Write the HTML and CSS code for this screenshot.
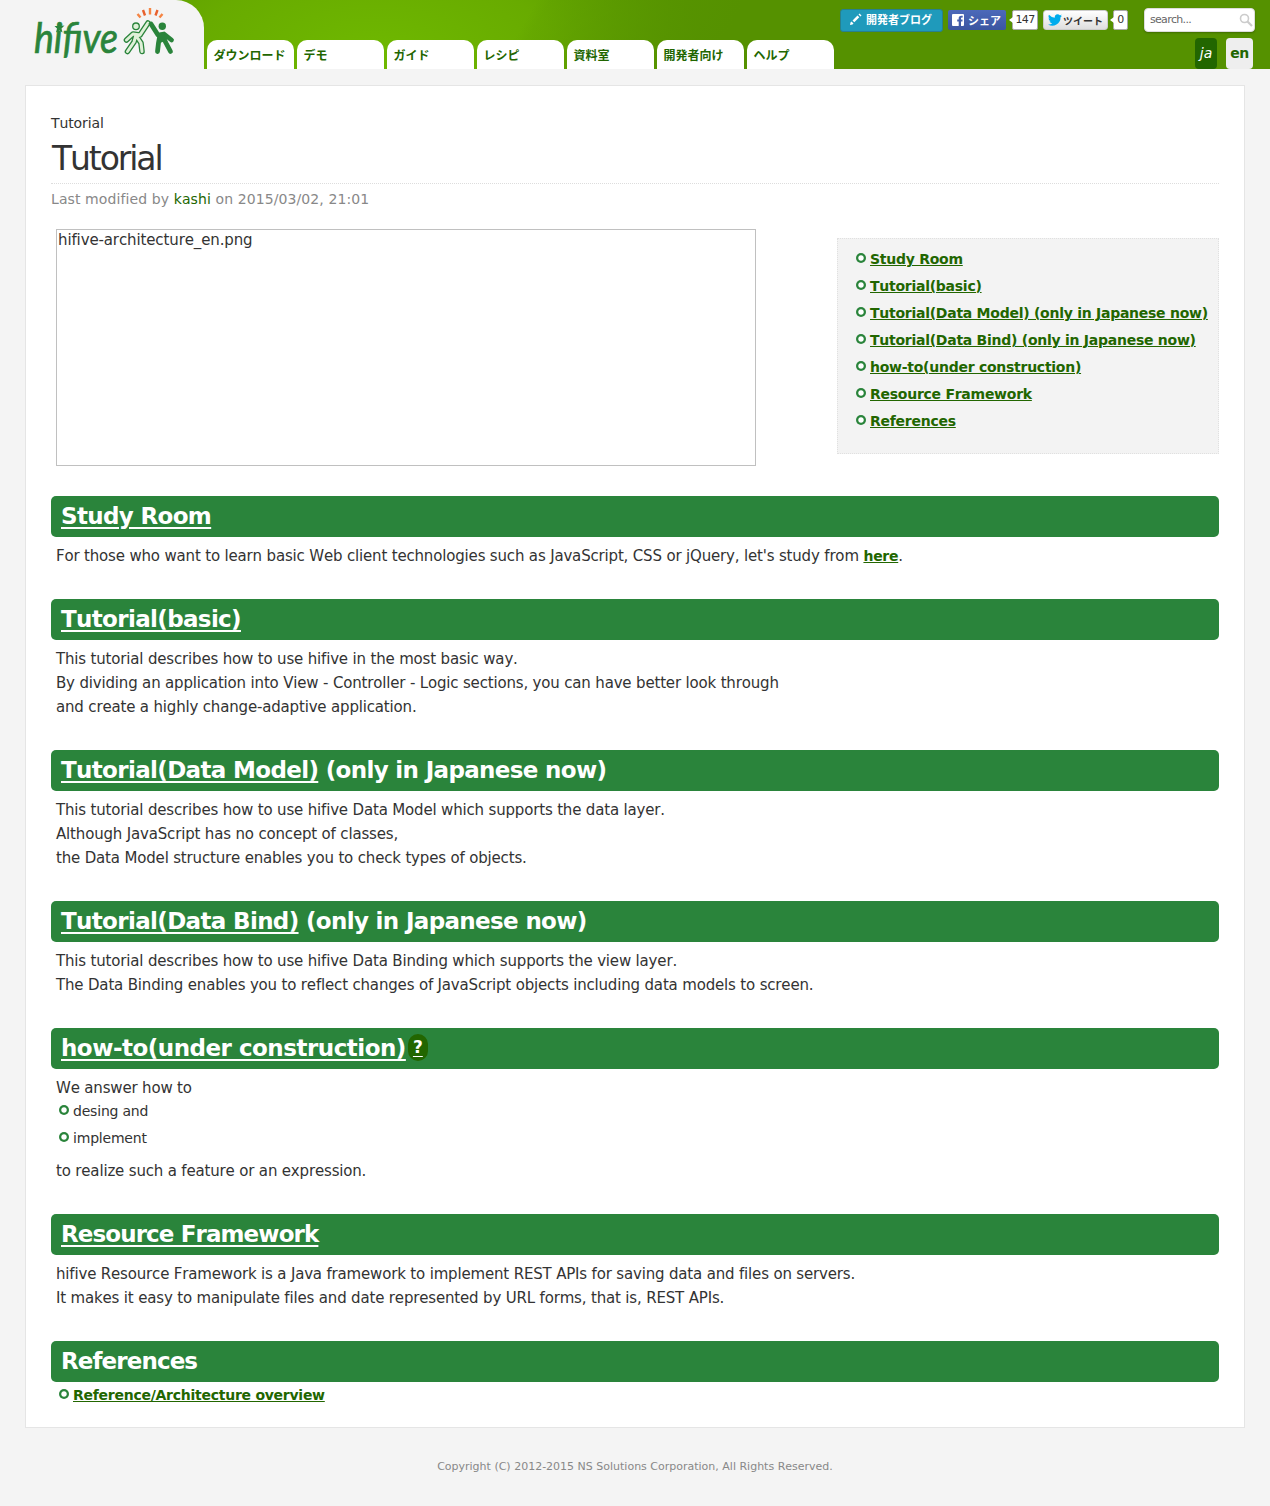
FILE: index.html
```html
<!DOCTYPE html>
<html lang="en">
<head>
<meta charset="utf-8">
<title>Tutorial - hifive</title>
<link rel="stylesheet" href="styles.css">
</head>
<body>
<header class="site-header">
  <a class="logo" aria-label="hifive">
    <svg width="150" height="62" viewBox="30 6 150 62">
      <text x="34" y="53" textLength="84" lengthAdjust="spacingAndGlyphs" class="logo-word">hifive</text>
      <path d="M58 23.500l2.500 2.500 4-.5-3 3 1 4-3-2-3.500 2 1-4-2.500-2.500h3z" fill="#2a843b"/>
      <g stroke-width="2.400">
        <path d="M140.500 17.500l-3-3.500M159.500 17.500l3-3.500" stroke="#f58544"/>
        <path d="M145 15.500l-2-5.500M155.500 15.500l2-5.500" stroke="#e8612d"/>
        <path d="M150 14.500V8" stroke="#f58544"/>
      </g>
      <g fill="none" stroke-linecap="round" stroke-linejoin="round">
        <g stroke="#2a843b" stroke-width="5.600">
          <path d="M148 23l-8 12-7-1-6.500 6M136 35l-2 7-6.500 9.500M137 37l4 6 1 8.500M137 36l3-1"/>
        </g>
        <g stroke="#dff0d8" stroke-width="3">
          <path d="M148 23l-8 12-7-1-6.500 6M136 35l-2 7-6.500 9.500M137 37l4 6 1 8.500M137 36l3-1"/>
        </g>
        <circle cx="136" cy="26.300" r="3.300" fill="#dff0d8" stroke="#2a843b" stroke-width="1.300"/>
        <path d="M151 24l7 11 6-1 7.500 6M160 35l-1.500 8-1 8.500M162 35l4 8 4.500 8.500" stroke="#2a843b" stroke-width="4.800"/>
        <path d="M158 34h6l1 7-5 2z" fill="#2a843b"/>
        <circle cx="162.300" cy="26.300" r="3.700" fill="#2a843b"/>
      </g>
    </svg>
  </a>
  <nav class="tabs">
    <a>ダウンロード</a><a>デモ</a><a>ガイド</a><a>レシピ</a><a>資料室</a><a>開発者向け</a><a>ヘルプ</a>
  </nav>
  <div class="tools">
    <div class="tool-row">
      <a class="blog"><svg width="12" height="12" viewBox="0 0 12 12"><path d="M0 12l.5-2.500 1-1 2 2-1 1zM2.500 7.500l5-5 1.800 1.800-5 5zM8.500 1.500l1-1 2 2-1 1z" fill="#fff"/></svg>開発者ブログ</a>
      <a class="share"><svg width="12" height="12" viewBox="0 0 12 12"><path d="M1 0h10a1 1 0 0 1 1 1v10a1 1 0 0 1-1 1H9V7.500h1.500v-2H9V4.300c0-.6.300-.8.900-.8h.8V1.700H9.300C7.500 1.700 6.700 2.700 6.700 4v1.500H5.200v2h1.500V12H1a1 1 0 0 1-1-1V1a1 1 0 0 1 1-1z" fill="#fff"/></svg>シェア</a>
      <span class="count count-share">147</span>
      <a class="tweet"><svg width="14" height="12" viewBox="0 0 24 20"><path d="M24 2.500a10 10 0 0 1-2.800.8A5 5 0 0 0 23.300.6a10 10 0 0 1-3.100 1.200 4.900 4.900 0 0 0-8.400 4.500A14 14 0 0 1 1.700 1.200a4.900 4.900 0 0 0 1.500 6.500 5 5 0 0 1-2.200-.6 4.900 4.900 0 0 0 3.900 4.900 5 5 0 0 1-2.200.1 4.900 4.900 0 0 0 4.600 3.400A9.900 9.900 0 0 1 0 17.500a14 14 0 0 0 21.500-12.400A10 10 0 0 0 24 2.500z" fill="#00aced"/></svg>ツイート</a>
      <span class="count count-tweet">0</span>
      <div class="search"><span>search...</span><svg width="14" height="14" viewBox="0 0 14 14"><circle cx="5.500" cy="5.500" r="4" fill="none" stroke="#ccc" stroke-width="1.600"/><path d="M8.500 8.500l4.500 4.500" stroke="#ccc" stroke-width="2.200"/></svg></div>
    </div>
    <div class="langs"><a class="lang-ja">ja</a><a class="lang-en">en</a></div>
  </div>
</header>
<main class="content">
  <div class="crumb">Tutorial</div>
  <h1>Tutorial</h1>
  <p class="modified">Last modified by <a>kashi</a> on 2015/03/02, 21:01</p>
  <div class="intro">
    <div class="figure">hifive-architecture_en.png</div>
    <ul class="toc">
      <li><a>Study Room</a></li>
      <li><a>Tutorial(basic)</a></li>
      <li><a>Tutorial(Data Model) (only in Japanese now)</a></li>
      <li><a>Tutorial(Data Bind) (only in Japanese now)</a></li>
      <li><a>how-to(under construction)</a></li>
      <li><a>Resource Framework</a></li>
      <li><a>References</a></li>
    </ul>
  </div>
  <section>
    <h2><a>Study Room</a></h2>
    <p>For those who want to learn basic Web client technologies such as JavaScript, CSS or jQuery, let's study from <a>here</a>.</p>
  </section>
  <section>
    <h2><a>Tutorial(basic)</a></h2>
    <p>This tutorial describes how to use hifive in the most basic way.<br>By dividing an application into View - Controller - Logic sections, you can have better look through<br>and create a highly change-adaptive application.</p>
  </section>
  <section>
    <h2><a>Tutorial(Data Model)</a> (only in Japanese now)</h2>
    <p>This tutorial describes how to use hifive Data Model which supports the data layer.<br>Although JavaScript has no concept of classes,<br>the Data Model structure enables you to check types of objects.</p>
  </section>
  <section>
    <h2><a>Tutorial(Data Bind)</a> (only in Japanese now)</h2>
    <p>This tutorial describes how to use hifive Data Binding which supports the view layer.<br>The Data Binding enables you to reflect changes of JavaScript objects including data models to screen.</p>
  </section>
  <section>
    <h2 class="loose"><a>how-to(under construction)</a><a class="hint">?</a></h2>
    <p>We answer how to</p>
    <ul class="steps">
      <li>desing and</li>
      <li>implement</li>
    </ul>
    <p class="tail">to realize such a feature or an expression.</p>
  </section>
  <section>
    <h2 class="tight"><a>Resource Framework</a></h2>
    <p>hifive Resource Framework is a Java framework to implement REST APIs for saving data and files on servers.<br>It makes it easy to manipulate files and date represented by URL forms, that is, REST APIs.</p>
  </section>
  <section>
    <h2 class="tight">References</h2>
    <ul class="steps refs">
      <li><a>Reference/Architecture overview</a></li>
    </ul>
  </section>
</main>
<footer class="footer">Copyright (C) 2012-2015 NS Solutions Corporation, All Rights Reserved.</footer>
</body>
</html>
```
FILE: styles.css
```css
*, *::before { box-sizing: border-box; }
body {
  margin: 0;
  height: 1506px;
  background: #f4f4f4;
  color: #333;
  font-family: "DejaVu Sans", "Noto Sans CJK JP", sans-serif;
  font-size: 14px;
  font-kerning: none;
  font-variant-ligatures: none;
}
h1, h2, p, ul { margin: 0; padding: 0; font-weight: normal; }
ul { list-style: none; }
a { color: #260; }

.site-header {
  display: flex;
  height: 69px;
  background:
    linear-gradient(120deg, transparent 41%, rgba(85, 145, 0, .15) 42%, #559100 57%),
    radial-gradient(ellipse 330px 170px at 375px 60px, #6fb900, #68ab00 55%, #599800 100%);
}
.logo {
  width: 204px;
  height: 69px;
  padding: 6px 0 0 30px;
  background: #f4f4f4;
  border-top-right-radius: 28px;
}
.logo svg { display: block; }
.logo-word { font: italic 42px Lato, sans-serif; fill: #2a843b; stroke: #2a843b; stroke-width: .7px; }
.tabs { display: flex; gap: 3px; align-items: flex-end; margin-left: 3px; }
.tabs a {
  width: 87px;
  height: 29px;
  padding-left: 6.500px;
  border-radius: 10px 10px 0 0;
  background: #fff;
  font: bold 12px/30px "Noto Sans CJK JP", sans-serif;
  white-space: nowrap;
}
.tools { flex: 1; padding: 8px 14px 0 6px; }
.tool-row { display: flex; align-items: flex-start; height: 30px; }
.tool-row a { display: flex; align-items: center; font: bold 11px "Noto Sans CJK JP", sans-serif; white-space: nowrap; }
.tool-row .blog {
  width: 103px;
  height: 23px;
  margin-top: 1px;
  padding: 0 0 3px 9px;
  gap: 4px;
  border: 1px solid #28808c;
  border-radius: 3px;
  background: #1f9abb;
  color: #fff;
}
.tool-row .share {
  width: 58px;
  height: 20px;
  margin: 2px 0 0 5px;
  padding-left: 4px;
  gap: 4px;
  border-radius: 2px;
  background: linear-gradient(#4c69ba, #3b55a0);
  color: #fff;
}
.count {
  position: relative;
  height: 20px;
  margin: 2px 0 0 6px;
  border: 1px solid #aaa;
  border-radius: 2px;
  background: #fff;
  font: 11px/18px "DejaVu Sans", sans-serif;
  letter-spacing: -.7px;
  text-align: center;
}
.count::before {
  content: "";
  position: absolute;
  left: -4px;
  top: 6px;
  border: 3px solid transparent;
  border-left: 0;
  border-right: 4px solid #fff;
}
.count-share { width: 26px; }
.count-tweet { width: 15px; margin-left: 5px; }
.tool-row .tweet {
  width: 65px;
  height: 20px;
  margin: 2px 0 0 5px;
  padding-left: 4px;
  gap: 1px;
  border: 1px solid #ccc;
  border-radius: 3px;
  background: linear-gradient(#fff, #dedede);
  color: #333;
  font-size: 10px;
}
.search {
  display: flex;
  justify-content: space-between;
  width: 111px;
  height: 24px;
  margin-left: 16px;
  padding: 4px 1px 0 5px;
  border: 1px solid #ddd;
  border-radius: 4px;
  background: #fff;
  box-shadow: 0 1px 2px rgba(0, 0, 0, .25);
  color: #666;
  font-size: 11px;
  letter-spacing: -.7px;
}
.langs { display: flex; justify-content: flex-end; gap: 9px; padding-right: 3px; }
.langs a { height: 31px; border-radius: 4px; line-height: 30px; text-align: center; }
.lang-ja { width: 22px; background: #260; color: #fff; font-style: italic; }
.lang-en { width: 27px; background: #eee; font-weight: bold; letter-spacing: -.4px; }

.content {
  height: 1343px;
  margin: 16px 25px 0;
  padding: 25px;
  border: 1px solid #e5e5e5;
  background: #fff;
}
.crumb { height: 24px; line-height: 24px; letter-spacing: -.100px; }
h1 {
  height: 49px;
  padding-left: 1px;
  border-bottom: 1px dotted #ddd;
  font-size: 33px;
  line-height: 47px;
  letter-spacing: -2.100px;
}
.modified { height: 45px; color: #888; line-height: 31px; letter-spacing: .100px; }
.intro { display: flex; justify-content: space-between; align-items: flex-start; height: 267px; padding-left: 5px; }
.figure { width: 700px; height: 237px; padding: 0 1px; border: 1px solid #c0c0c0; font-size: 15px; line-height: 21px; letter-spacing: -.120px; }
.toc { width: 382px; height: 216px; margin-top: 9px; padding: 9px 0 0 18px; border: 1px dotted #e0e0e0; background: #f3f3f3; }
li { display: flex; height: 22px; margin-bottom: 5px; gap: 4px; line-height: 22px; letter-spacing: -.200px; white-space: nowrap; }
li::before {
  content: "";
  width: 10px;
  height: 10px;
  margin-top: 5px;
  border-radius: 5px;
  background: radial-gradient(circle, #fff 2.200px, #2a843b 3.200px);
}
li a, section p a { font-size: 14px; font-weight: bold; letter-spacing: -.260px; text-decoration: underline; text-decoration-thickness: 1px; }

h2 {
  height: 41px;
  margin-bottom: 7px;
  padding-left: 10px;
  border-radius: 5px;
  background: #2a843b;
  color: #fff;
  font-size: 23px;
  font-weight: bold;
  line-height: 40px;
  letter-spacing: -.650px;
}
.loose { letter-spacing: -.500px; }
.tight { letter-spacing: -.900px; }
h2 a { color: #fff; text-decoration: underline; text-decoration-thickness: 2px; text-underline-offset: 3px; }
h2 .hint {
  display: inline-block;
  width: 20px;
  height: 27px;
  margin-left: 2px;
  border-radius: 10px;
  background: #260;
  font-size: 17px;
  line-height: 27px;
  letter-spacing: 0;
  text-align: center;
  text-decoration-thickness: 1px;
  vertical-align: 3px;
}
section { margin-bottom: 31px; }
section p { padding-left: 5px; font-size: 15px; line-height: 24px; letter-spacing: -.170px; white-space: nowrap; }
.steps { height: 59px; padding-left: 8px; }
.refs { margin-top: -5px; }
.footer { padding-top: 31px; color: #888; font-size: 11px; line-height: 16px; text-align: center; }
```
